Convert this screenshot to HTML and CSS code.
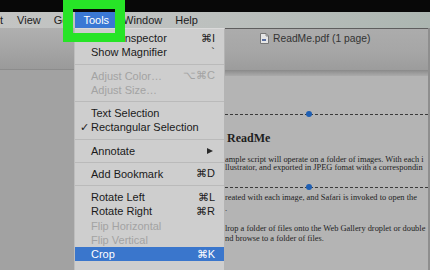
FILE: index.html
```html
<!DOCTYPE html>
<html>
<head>
<meta charset="utf-8">
<link rel="stylesheet" href="styles.css">
</head>
<body>
<div class="screen">
  <div class="topbar"></div>
  <div class="menubar">
    <span class="mb-item mb-t">t</span>
    <span class="mb-item mb-view">View</span>
    <span class="mb-item mb-go">Go</span>
    <span class="mb-item mb-tools">Tools</span>
    <span class="mb-item mb-window">Window</span>
    <span class="mb-item mb-help">Help</span>
  </div>
  <div class="main">
    <div class="sidebar">
      <div class="sidebar-top"></div>
    </div>
    <div class="menu">
      <div class="row"><span class="label">Show Inspector</span><span class="key">⌘I</span></div>
      <div class="row"><span class="label">Show Magnifier</span><span class="key">`</span></div>
      <div class="sep"></div>
      <div class="row disabled"><span class="label">Adjust Color…</span><span class="key">⌥⌘C</span></div>
      <div class="row disabled"><span class="label">Adjust Size…</span><span class="key"></span></div>
      <div class="sep"></div>
      <div class="row"><span class="label">Text Selection</span><span class="key"></span></div>
      <div class="row"><span class="check">✓</span><span class="label">Rectangular Selection</span><span class="key"></span></div>
      <div class="sep"></div>
      <div class="row"><span class="label">Annotate</span><span class="arrow"></span></div>
      <div class="sep"></div>
      <div class="row"><span class="label">Add Bookmark</span><span class="key">⌘D</span></div>
      <div class="sep"></div>
      <div class="row"><span class="label">Rotate Left</span><span class="key">⌘L</span></div>
      <div class="row"><span class="label">Rotate Right</span><span class="key">⌘R</span></div>
      <div class="row disabled"><span class="label">Flip Horizontal</span><span class="key"></span></div>
      <div class="row disabled"><span class="label">Flip Vertical</span><span class="key"></span></div>
      <div class="row selected"><span class="label">Crop</span><span class="key">⌘K</span></div>
    </div>
    <div class="window">
      <div class="toolbar">
        <div class="title">
          <svg class="doc-icon" width="9" height="11" viewBox="0 0 9 11">
            <path d="M0.5 0.5 H6 L8.5 3 V10.5 H0.5 Z" fill="#e6e6e6" stroke="#777" stroke-width="1"/>
            <path d="M6 0.5 V3 H8.5" fill="none" stroke="#777" stroke-width="0.8"/>
            <rect x="2" y="6" width="4" height="2" fill="#5a6fa0"/>
          </svg>
          <span>ReadMe.pdf (1 page)</span>
        </div>
      </div>
      <div class="toolbar-edge"></div>
      <div class="doc">
        <div class="rule"><span class="dot"></span></div>
        <div class="heading">ReadMe</div>
        <p class="para para1">ample script will operate on a folder of images. With each i<br>llustrator, and exported in JPEG fomat with a correspondin</p>
        <div class="rule rule2"><span class="dot"></span></div>
        <p class="para para2">reated with each image, and Safari is invoked to open the<br>.</p>
        <p class="para para3">lrop a folder of files onto the Web Gallery droplet or double<br>nd browse to a folder of files.</p>
      </div>
    </div>
  </div>
  <div class="highlight-box"></div>
</div>
</body>
</html>
```

FILE: styles.css
```css
* { box-sizing: border-box; }
html, body { margin: 0; padding: 0; }
body {
  width: 430px;
  height: 270px;
  overflow: hidden;
  font-family: "Liberation Sans", Arial, sans-serif;
  background: #a4a4a4;
}
.screen {
  position: relative;
  width: 430px;
  height: 270px;
  overflow: hidden;
  display: flex;
  flex-direction: column;
}
.topbar {
  height: 12px;
  background: #080808;
  flex: none;
}
.menubar {
  height: 16px;
  flex: none;
  display: flex;
  align-items: center;
  background: linear-gradient(90deg, #c3c4c3 0%, #bcc0be 50%, #acb6b1 100%);
  font-size: 11px;
  color: #1c1c1c;
  position: relative;
}
.mb-item { line-height: 16px; height: 16px; }
.mb-t { margin-left: 0px; }
.mb-view { margin-left: 14px; }
.mb-go { margin-left: 13px; }
.mb-tools {
  margin-left: 7px;
  background: #3a78d4;
  color: #fff;
  padding: 0 6px 0 8px;
}
.mb-window { margin-left: 8px; }
.mb-help { margin-left: 13px; }

.main {
  flex: 1;
  display: flex;
  min-height: 0;
}
.sidebar {
  width: 75px;
  flex: none;
  background: #a2a2a2;
  border-right: 1px solid #bdbdbd;
}
.sidebar-top {
  height: 42px;
  background: linear-gradient(180deg, #b0b0b0 0%, #a3a3a3 60%, #9a9a9a 100%);
  border-bottom: 1px solid #8c8c8c;
}
.menu {
  width: 150px;
  flex: none;
  background: #cecece;
  padding-top: 2px;
  font-size: 11px;
  color: #1a1a1a;
  border-right: 1px solid #b4b4b4;
  border-top: 1px solid #dadada;
}
.row {
  height: 14.25px;
  display: flex;
  align-items: center;
  padding-left: 16px;
  padding-right: 9px;
  position: relative;
  white-space: nowrap;
}
.label { flex: 1; }
.key { text-align: right; font-size: 11px; }
.check {
  position: absolute;
  left: 5px;
  font-size: 11px;
}
.arrow {
  width: 0;
  height: 0;
  border-top: 3.5px solid transparent;
  border-bottom: 3.5px solid transparent;
  border-left: 6px solid #2a2a2a;
  margin-right: 2px;
}
.disabled { color: #a3a3a3; }
.selected {
  background: #3a76cc;
  color: #fff;
}
.sep {
  height: 9px;
  display: flex;
  align-items: center;
}
.sep::before {
  content: "";
  display: block;
  height: 1px;
  width: 100%;
  background: #bababa;
}

.window {
  flex: 1;
  display: flex;
  flex-direction: column;
  min-width: 0;
  border-right: 2px solid #8e8e8e;
}
.toolbar {
  height: 42px;
  flex: none;
  background: linear-gradient(180deg, #acacac 0%, #a6a6a6 55%, #9c9c9c 100%);
  border-top: 1px solid #5e5e5e;
}
.title {
  display: flex;
  align-items: center;
  gap: 4px;
  padding-left: 35px;
  padding-top: 4px;
  font-size: 10.3px;
  color: #333;
}
.doc-icon { display: block; }
.toolbar-edge {
  height: 6px;
  flex: none;
  background: linear-gradient(180deg, #8a8a8a 0%, #9b9b9b 50%, #ababab 100%);
}
.doc {
  flex: 1;
  background: #b4b4b4;
  padding-top: 38px;
  font-family: "Liberation Serif", "Times New Roman", serif;
  color: #1e1e1e;
  white-space: nowrap;
  overflow: hidden;
}
.rule {
  position: relative;
  height: 1px;
  border-top: 1.2px dashed #3a3a3a;
}
.dot {
  position: absolute;
  left: 81px;
  top: -4px;
  width: 6px;
  height: 6px;
  border-radius: 50%;
  background: #1f5fb3;
}
.heading {
  font-weight: bold;
  font-size: 12px;
  padding-left: 2px;
  margin-top: 16px;
  line-height: 14px;
}
.para {
  margin: 0;
  font-size: 8.4px;
}
.para1 { margin-top: 11px; line-height: 7.6px; }
.rule2 { margin-top: 16px; }
.para2 { margin-top: 4px; line-height: 11px; }
.para3 { margin-top: 9.5px; line-height: 10.7px; }

.highlight-box {
  position: absolute;
  left: 63px;
  top: 0;
  width: 62px;
  height: 42px;
  border-style: solid;
  border-color: #27e427;
  border-width: 9px 10px 9px 10px;
}
```
